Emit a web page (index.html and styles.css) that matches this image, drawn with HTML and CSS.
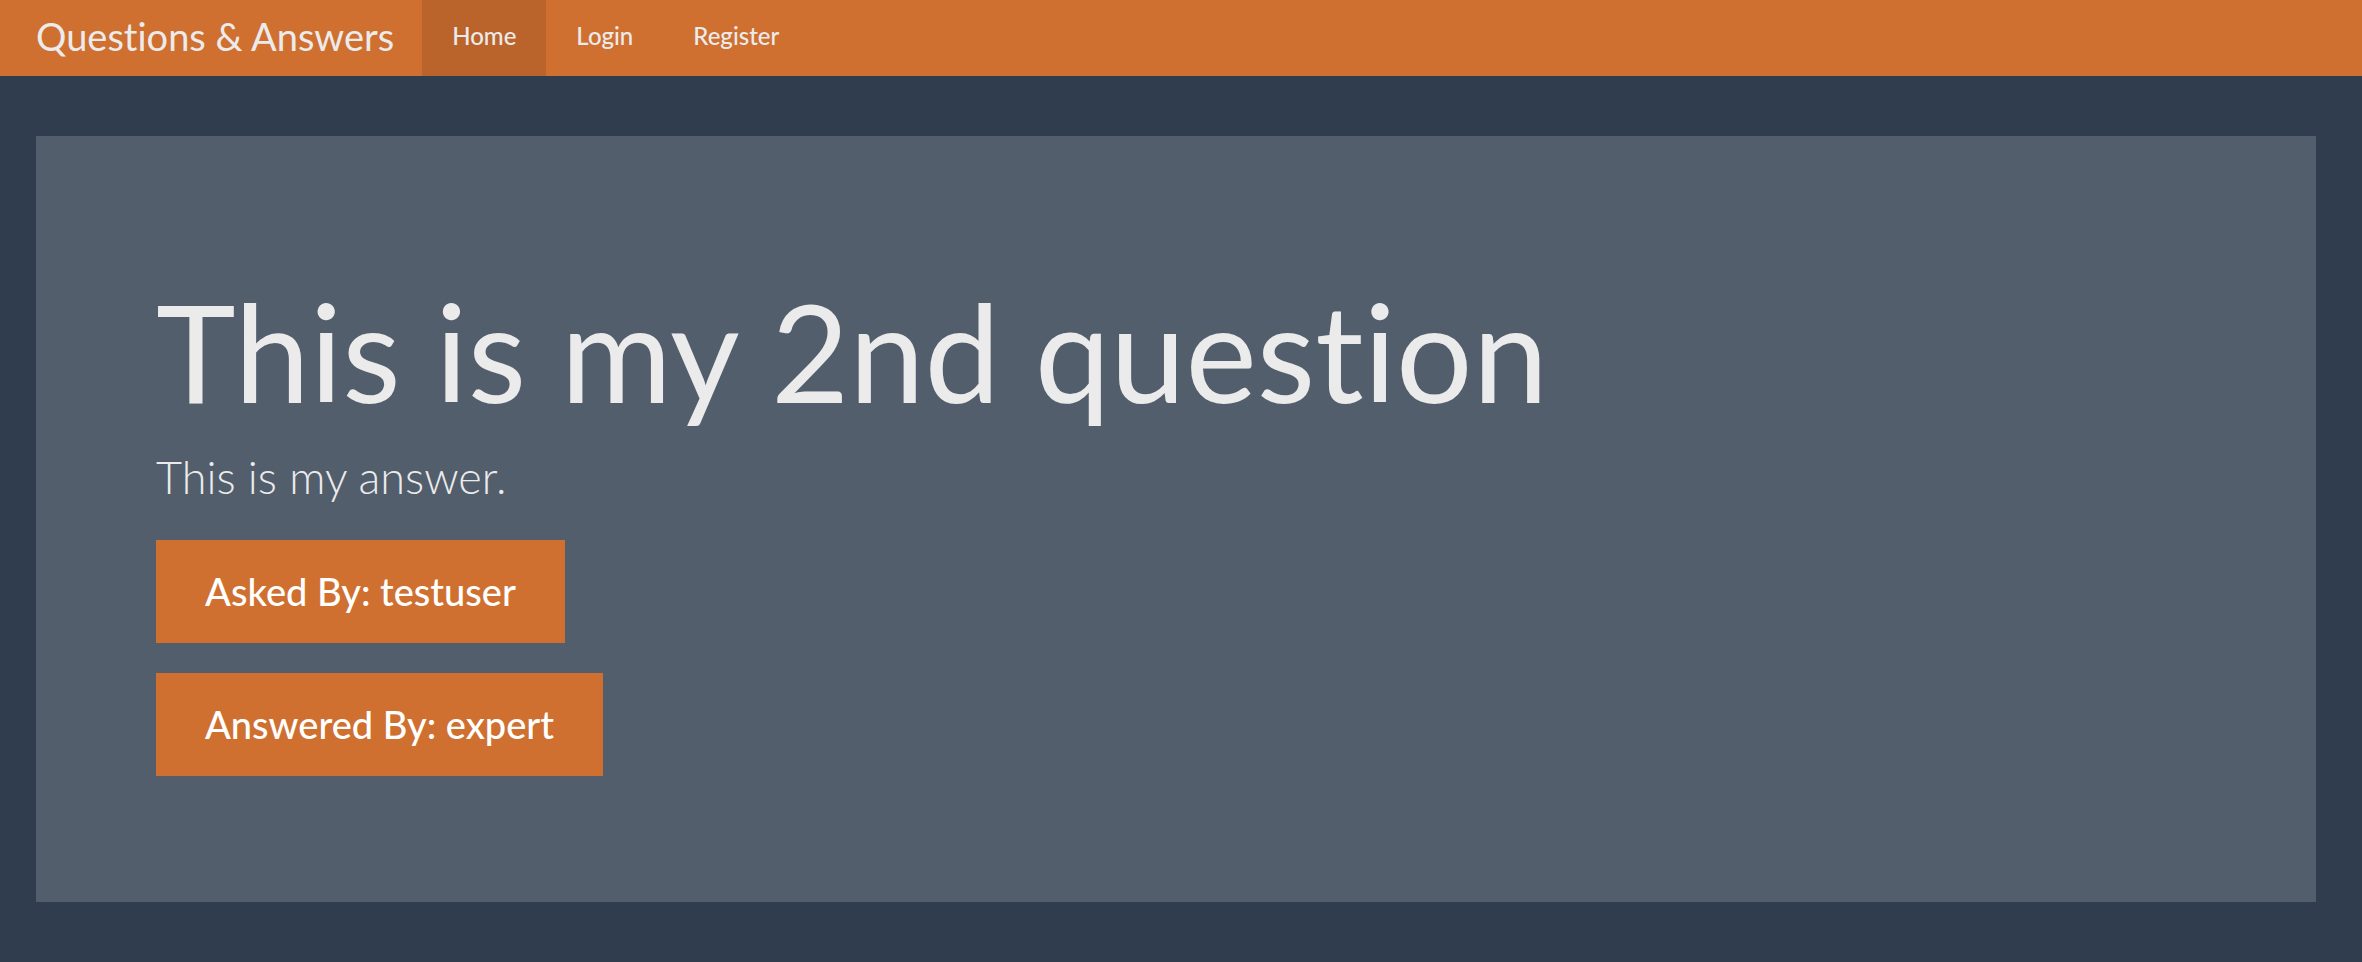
FILE: index.html
```html
<!DOCTYPE html>
<html lang="en">
<head>
<meta charset="utf-8">
<meta name="viewport" content="width=device-width, initial-scale=1">
<title>Questions &amp; Answers</title>
<link rel="stylesheet" href="styles.css">
</head>
<body>
<nav class="navbar">
  <a class="navbar-brand" href="#">Questions &amp; Answers</a>
  <ul class="navbar-nav">
    <li><a class="nav-link active" href="#" aria-current="page">Home</a></li>
    <li><a class="nav-link" href="#">Login</a></li>
    <li><a class="nav-link" href="#">Register</a></li>
  </ul>
</nav>
<main class="container">
  <section class="jumbotron">
    <h1 class="question">This is my 2nd question</h1>
    <p class="answer">This is my answer.</p>
    <p class="action"><a class="btn" href="#">Asked By: testuser</a></p>
    <p class="action"><a class="btn" href="#">Answered By: expert</a></p>
  </section>
</main>
</body>
</html>
```
FILE: styles.css
```css
* {
  box-sizing: border-box;
}

body {
  margin: 0;
  background: #303d4e;
  color: #ebebeb;
  font-family: Lato, "Liberation Sans", sans-serif;
  font-size: 30px;
  font-variant-ligatures: none;
  line-height: 43px;
}

a {
  color: inherit;
  text-decoration: none;
}

.navbar {
  display: flex;
  align-items: stretch;
  padding-left: 36px;
  background: #cf7031;
}

.navbar-brand {
  margin-right: 28px;
  padding: 15px 0 18px;
  font-size: 38px;
}

.navbar-nav {
  display: flex;
  margin: 0;
  padding: 0;
  list-style: none;
}

.navbar-nav li {
  display: flex;
}

.nav-link {
  display: flex;
  align-items: center;
  padding: 0 30px 6px;
  font-size: 24px;
  font-weight: 500;
}

.nav-link.active {
  background: #ba642c;
}

.container {
  padding: 60px 46px 60px 36px;
}

.jumbotron {
  padding: 140px 120px 96px;
  background: #525e6b;
}

.question {
  margin: 0 0 18px;
  font-size: 135px;
  font-weight: 400;
  line-height: 150px;
}

.answer {
  margin: 0 0 30px;
  font-size: 45px;
  font-weight: 300;
  line-height: 66px;
}

.action {
  margin: 0 0 30px;
}

.btn {
  display: inline-block;
  padding: 26px 49px;
  background: #cf7031;
  color: #fff;
  font-size: 38px;
  font-weight: 500;
  line-height: 51px;
  vertical-align: top;
}
```
